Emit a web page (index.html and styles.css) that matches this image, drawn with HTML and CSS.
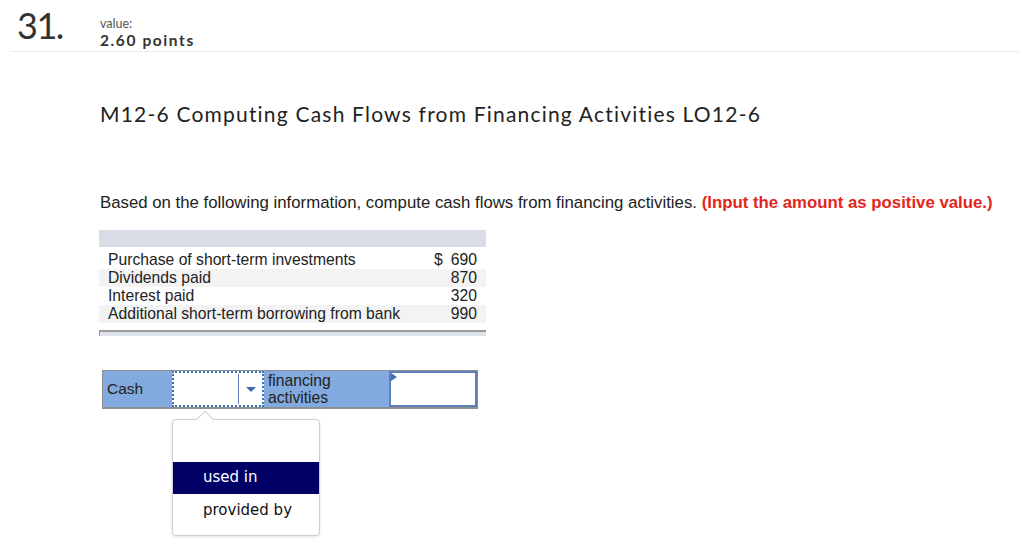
FILE: index.html
```html
<!DOCTYPE html>
<html>
<head>
<meta charset="utf-8">
<link rel="stylesheet" href="styles.css">
</head>
<body>
<div class="header">
  <div class="qnum">31.</div>
  <div class="value">
    <div class="value-label">value:</div>
    <div class="value-points">2.60 points</div>
  </div>
</div>
<div class="content">
  <h1 class="title">M12-6 Computing Cash Flows from Financing Activities LO12-6</h1>
  <p class="prompt">Based on the following information, compute cash flows from financing activities. <span class="hint">(Input the amount as positive value.)</span></p>
  <div class="info">
    <div class="info-head"></div>
    <div class="info-row"><span>Purchase of short-term investments</span><span><span class="cur">$</span>690</span></div>
    <div class="info-row alt"><span>Dividends paid</span><span>870</span></div>
    <div class="info-row"><span>Interest paid</span><span>320</span></div>
    <div class="info-row alt"><span>Additional short-term borrowing from bank</span><span>990</span></div>
    <div class="info-foot"></div>
  </div>
  <div class="answer">
    <div class="cell-cash">Cash</div>
    <div class="select">
      <div class="select-box"></div>
      <div class="select-arrow"><span class="caret"></span></div>
      <div class="popup">
        <div class="notch"></div>
        <div class="popup-blank"></div>
        <div class="option selected">used in</div>
        <div class="option">provided by</div>
      </div>
    </div>
    <div class="cell-text">financing<br>activities</div>
    <div class="cell-input"><span class="flag"></span></div>
  </div>
</div>
</body>
</html>
```

FILE: styles.css
```css
html, body {
  margin: 0;
  padding: 0;
  background: #ffffff;
}
body {
  width: 1024px;
  height: 560px;
  overflow: hidden;
  font-family: "Liberation Sans", Arial, sans-serif;
  color: #222;
}
.header {
  display: flex;
  align-items: flex-start;
  margin: 0 4px 0 10px;
  height: 52px;
  border-bottom: 1px solid #ececec;
  box-sizing: border-box;
}
.qnum {
  font-family: "Lato", sans-serif;
  font-size: 36px;
  line-height: 36px;
  color: #333;
  margin: 7px 0 0 7px;
  width: 83px;
  letter-spacing: -1.5px;
}
.value {
  display: flex;
  flex-direction: column;
  font-family: "Lato", sans-serif;
  padding-top: 17px;
}
.value-label {
  font-size: 12.5px;
  line-height: 14px;
  color: #555;
}
.value-points {
  font-size: 15.5px;
  line-height: 19px;
  font-weight: 700;
  letter-spacing: 1.6px;
  color: #333;
}
.content {
  padding-left: 100px;
}
.title {
  font-family: "Lato", sans-serif;
  font-weight: 400;
  font-size: 21px;
  line-height: 24px;
  letter-spacing: 1.2px;
  color: #222;
  margin: 50px 0 0 0;
}
.prompt {
  font-size: 16.8px;
  line-height: 20px;
  margin: 67px 0 0 0;
  color: #222;
}
.hint {
  color: #e3261b;
  font-weight: 700;
}
.info {
  width: 387px;
  margin: 17px 0 0 -1px;
  font-size: 15.7px;
  line-height: 18px;
}
.info-head {
  height: 17px;
  background: #d7dce5;
  margin-bottom: 4px;
}
.info-row {
  display: flex;
  justify-content: space-between;
  padding: 0 9px;
  background: #ffffff;
  color: #222;
}
.info-row.alt {
  background: #f3f3f3;
}
.cur {
  margin-right: 8px;
}
.info-foot {
  margin-top: 7px;
  height: 4px;
  border-top: 2px solid #9a9a9a;
  border-left: 1px solid #9a9a9a;
  background: #dfe4eb;
}
.answer {
  position: relative;
  display: flex;
  width: 374px;
  height: 36px;
  margin: 34px 0 0 2px;
  background: #82aade;
  border: 1px solid #8a8f96;
  border-bottom-width: 2px;
  font-size: 15.5px;
}
.cell-cash {
  width: 69px;
  padding-left: 4px;
  box-sizing: border-box;
  display: flex;
  align-items: center;
  color: #222;
}
.select {
  position: relative;
  display: flex;
  width: 92px;
  height: 36px;
  box-sizing: border-box;
  border: 2px dotted #3d6fb3;
  background: #fff;
}
.select-box {
  flex: 1;
  border-right: 1px solid #5b7db3;
  margin: 1px 0;
}
.select-arrow {
  width: 23px;
  display: flex;
  align-items: center;
  justify-content: center;
}
.caret {
  width: 0;
  height: 0;
  border-left: 5px solid transparent;
  border-right: 5px solid transparent;
  border-top: 5px solid #3b6cb2;
}
.cell-text {
  width: 125px;
  padding-left: 4px;
  box-sizing: border-box;
  font-size: 15.7px;
  line-height: 17px;
  display: flex;
  align-items: center;
  color: #222;
}
.cell-input {
  position: relative;
  flex: 1;
  background: #fff;
  border: 2px solid #5c7fb5;
}
.flag {
  position: absolute;
  left: 0;
  top: 0;
  width: 0;
  height: 0;
  border-top: 4px solid transparent;
  border-bottom: 4px solid transparent;
  border-left: 6px solid #3d6fb3;
}
.popup {
  position: absolute;
  left: -2px;
  top: 46px;
  width: 148px;
  height: 117px;
  box-sizing: border-box;
  background: #fff;
  border: 1px solid #cfcfcf;
  border-radius: 4px;
  box-shadow: 0 1px 3px rgba(0,0,0,0.12);
  font-family: "DejaVu Sans", Verdana, sans-serif;
  font-size: 15px;
  z-index: 2;
}
.notch {
  position: absolute;
  left: 26px;
  top: -7px;
  width: 11px;
  height: 11px;
  background: #fff;
  border-left: 1px solid #cfcfcf;
  border-top: 1px solid #cfcfcf;
  transform: rotate(45deg);
}
.popup-blank {
  height: 42px;
}
.option {
  height: 33px;
  line-height: 31px;
  padding-left: 30px;
  color: #111;
}
.option.selected {
  background: #000066;
  color: #fff;
  height: 32px;
  margin-bottom: 1px;
}
```
